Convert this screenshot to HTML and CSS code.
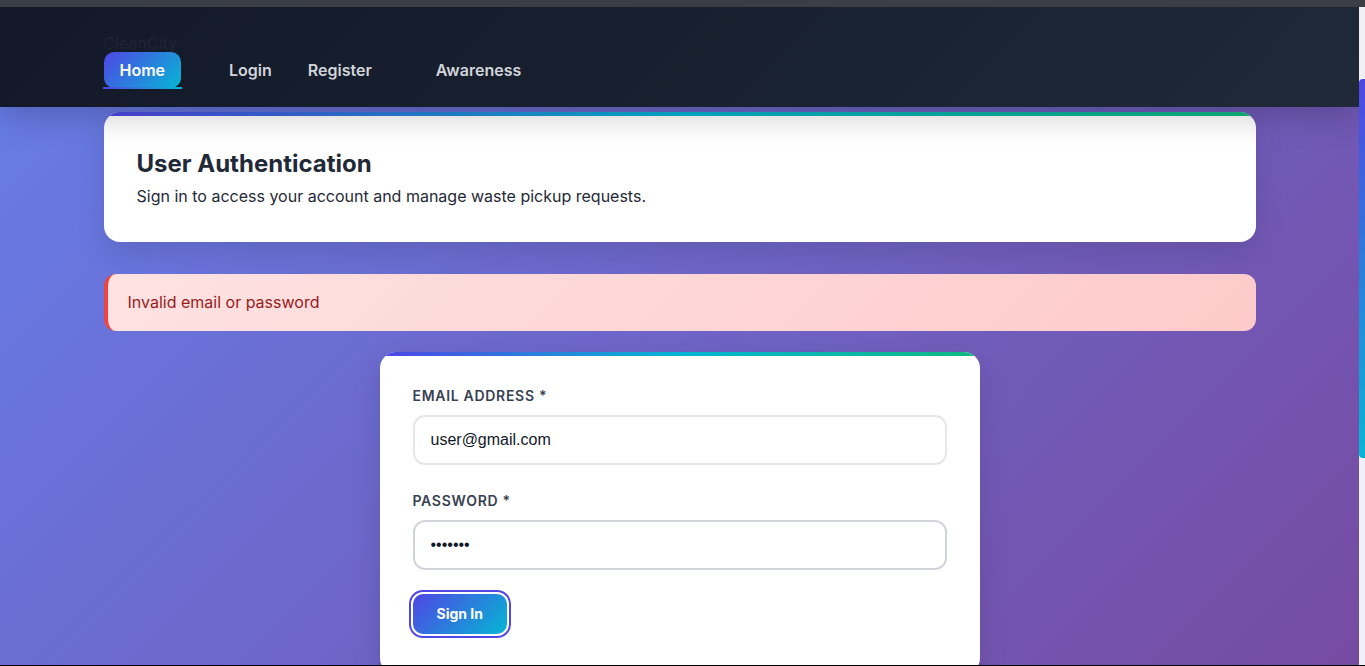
FILE: index.html
```html
<!DOCTYPE html>
<html lang="en">
<head>
<meta charset="utf-8">
<title>CleanCity - Login</title>
<link rel="stylesheet" href="styles.css">
</head>
<body>
<div class="topbar"></div>
<div class="frame">
  <div class="viewport">
    <header class="site-header">
      <div class="container">
        <div class="logo">CleanCity</div>
        <nav class="nav">
          <a class="nav-link active" href="#">Home</a>
          <div class="nav-group">
            <a class="nav-link" href="#">Login</a>
            <a class="nav-link" href="#">Register</a>
          </div>
          <a class="nav-link" href="#">Awareness</a>
        </nav>
      </div>
    </header>
    <main class="container main">
      <section class="card page-head">
        <h1>User Authentication</h1>
        <p>Sign in to access your account and manage waste pickup requests.</p>
      </section>
      <div class="alert">Invalid email or password</div>
      <form class="card form-card">
        <div class="field">
          <label for="email">Email Address *</label>
          <input id="email" type="email" value="user@gmail.com">
        </div>
        <div class="field">
          <label for="pw">Password *</label>
          <input id="pw" class="hover" type="password" value="1234567">
        </div>
        <button type="button" class="btn focused">Sign In</button>
      </form>
    </main>
  </div>
  <div class="scrolltrack"><div class="thumb"></div></div>
</div>
<div class="bottomline"></div>
</body>
</html>
```
FILE: styles.css
```css
* { box-sizing: border-box; }
html, body { margin: 0; padding: 0; }
body {
  height: 666px;
  overflow: hidden;
  display: grid;
  grid-template-rows: 7px 1fr 1px;
  font-family: "Inter", "Noto Sans", sans-serif;
  color: #1f2937;
}
.topbar { background: #3b3e45; }
.bottomline { background: #000; }
.frame { display: flex; min-height: 0; overflow: hidden; }
.viewport {
  flex: 1;
  overflow: hidden;
  background: linear-gradient(135deg, #667eea 0%, #764ba2 100%);
}
.scrolltrack { width: 6px; background: #f1f0f6; }
.thumb {
  margin-top: 72px;
  height: 379px;
  border-radius: 4px 0 0 4px;
  background: linear-gradient(180deg, #4f46e5 0%, #06b6d4 100%);
}
.container { max-width: 1200px; margin: 0 auto; padding: 0 24px; }
.site-header {
  position: relative;
  z-index: 5;
  height: 100px;
  background: linear-gradient(135deg, #121827 0%, #1f2937 100%);
  box-shadow: 0 8px 32px rgba(0, 0, 0, 0.22);
  padding-top: 27px;
}
.logo {
  font-size: 16px;
  line-height: 18px;
  color: #1e2533;
  height: 18px;
}
.nav { display: flex; align-items: center; gap: 32px; }
.nav-group { display: flex; gap: 4px; }
.nav-link {
  position: relative;
  display: block;
  padding: 8px 16px;
  font-family: "Inter", "Noto Sans", sans-serif;
  font-weight: 600;
  font-size: 16px;
  line-height: 20px;
  color: #d1d5db;
  text-decoration: none;
  border-radius: 10px;
}
.nav-link.active {
  color: #fff;
  background: linear-gradient(135deg, #4f46e5 0%, #06b6d4 100%);
}
.nav-link.active::after {
  content: "";
  position: absolute;
  left: -1px;
  right: -1px;
  bottom: -1px;
  height: 2px;
  background: linear-gradient(90deg, #4f46e5, #06b6d4);
}
.main { padding-top: 5px; }
.card {
  position: relative;
  background: #fff;
  border-radius: 16px;
  box-shadow: 0 10px 30px rgba(0, 0, 0, 0.12);
  overflow: hidden;
}
.card::before {
  content: "";
  display: block;
  height: 4px;
  background: linear-gradient(90deg, #4f46e5 0%, #06b6d4 50%, #10b981 100%);
}
.page-head { padding: 0 32px 34px 33px; }
.page-head::before { margin: 0 -32px 32px -33px; }
.page-head h1 {
  margin: 0 0 4px;
  font-size: 24px;
  line-height: 32px;
  font-weight: 700;
  color: #1f2937;
}
.page-head p {
  margin: 0;
  font-size: 16px;
  line-height: 24px;
  color: #1f2937;
}
.alert {
  margin-top: 32px;
  padding: 16px 20px 17px;
  border-left: 4px solid #ef4444;
  border-radius: 12px;
  background: linear-gradient(135deg, #fee2e2 0%, #fecaca 100%);
  color: #991b1b;
  font-size: 16px;
  line-height: 24px;
}
.form-card {
  width: 600px;
  margin: 21px auto 0;
  padding: 0 33px 40px;
}
.form-card::before { margin: 0 -33px 29px; }
.field { margin-bottom: 25px; }
.field label {
  display: block;
  margin-bottom: 9px;
  font-size: 14px;
  line-height: 21px;
  font-weight: 600;
  letter-spacing: 0.7px;
  text-transform: uppercase;
  color: #374151;
}
.field input {
  display: block;
  width: 100%;
  height: 50px;
  padding: 0 16px;
  border: 2px solid #e5e7eb;
  border-radius: 12px;
  font-family: "Liberation Sans", Arial, sans-serif;
  font-size: 16px;
  color: #111827;
  background: #fff;
  outline: none;
}
.field input.hover { border-color: #d1d5db; }
.btn {
  display: block;
  margin-top: -1px;
  padding: 12px 24px;
  border: none;
  border-radius: 10px;
  background: linear-gradient(135deg, #4f46e5 0%, #06b6d4 100%);
  color: #fff;
  font-family: "Inter", "Noto Sans", sans-serif;
  font-weight: 700;
  font-size: 14px;
  line-height: 16px;
}
.btn.focused {
  outline: 2px solid #4f46e5;
  outline-offset: 2px;
}
```
